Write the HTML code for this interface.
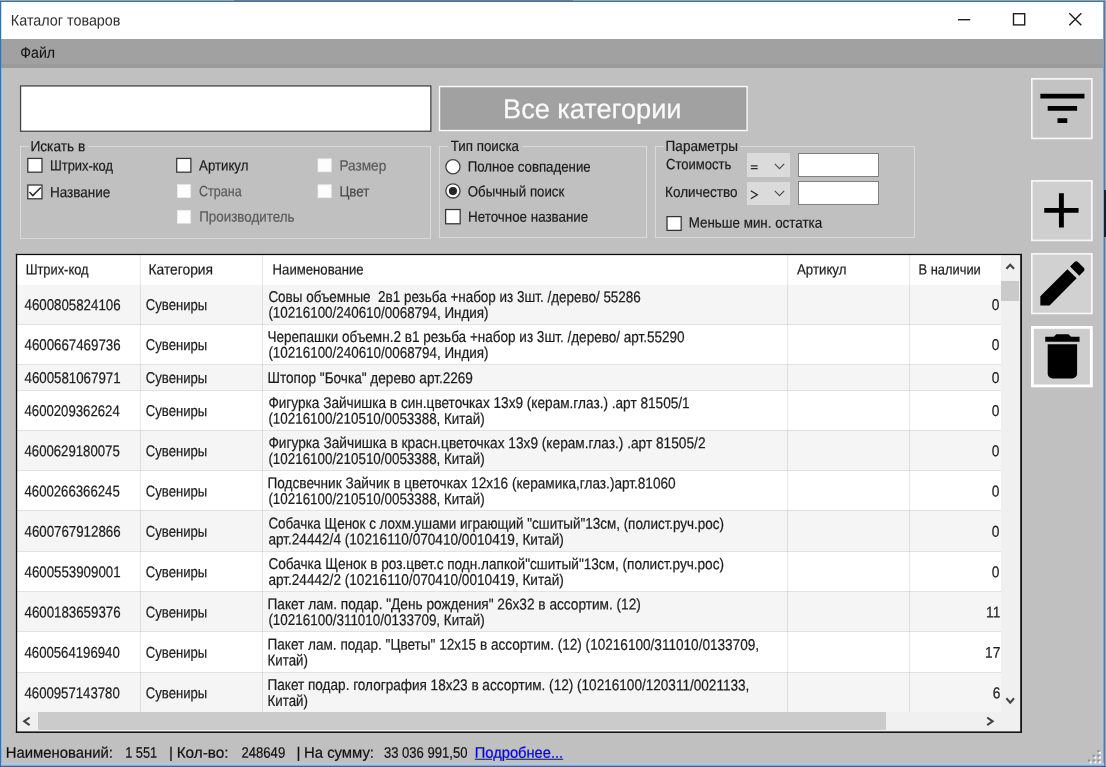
<!DOCTYPE html>
<html><head><meta charset="utf-8"><title>Каталог товаров</title>
<style>
html,body{margin:0;padding:0;}
body{width:1106px;height:767px;overflow:hidden;position:relative;background:#c0c0c0;font-family:"Liberation Sans",sans-serif;}
#w div,#w svg,#w span{position:absolute;}
#w{position:absolute;left:0;top:0;width:1106px;height:767px;overflow:hidden;will-change:transform;}
.t{-webkit-text-stroke:0.22px currentColor;white-space:pre;line-height:18px;height:18px;transform-origin:0 50%;}
</style></head><body><div id="w">
<div style="left:0px;top:0px;width:1106px;height:767px;background:#3a70a0;"></div>
<div style="left:0px;top:0px;width:1106px;height:1px;background:#7fa6c4;"></div>
<div style="left:0px;top:1px;width:1106px;height:1px;background:#41759f;"></div>
<div style="left:234px;top:0px;width:339px;height:1px;background:#5a82a8;"></div>
<div style="left:0px;top:2px;width:1px;height:765px;background:#3a72a6;"></div>
<div style="left:1px;top:2px;width:1102px;height:37px;background:#ffffff;"></div>
<div style="left:1px;top:39px;width:1102px;height:29px;background:#a1a1a1;"></div>
<div style="left:1px;top:64px;width:1102px;height:4px;background:#9b9b9b;"></div>
<div style="left:1px;top:68px;width:1102px;height:695px;background:#c0c0c0;"></div>
<div style="left:1px;top:2px;width:1px;height:37px;background:#c9deee;"></div>
<div style="left:1px;top:39px;width:1px;height:29px;background:#7e9fc0;"></div>
<div style="left:1px;top:68px;width:1px;height:698px;background:#8fb6de;"></div>
<div style="left:2px;top:68px;width:1px;height:695px;background:#b4c4d4;"></div>
<div style="left:1103px;top:2px;width:1px;height:765px;background:#84a4c0;"></div>
<div style="left:1104px;top:2px;width:1px;height:765px;background:#587a9c;"></div>
<div style="left:1105px;top:0px;width:1px;height:767px;background:#8eaac6;"></div>
<div style="left:1104px;top:190px;width:2px;height:47px;background:#15202e;"></div>
<div style="left:1102px;top:68px;width:1px;height:695px;background:#acc4d8;"></div>
<div style="left:1px;top:763px;width:1103px;height:1px;background:#b2c8dc;"></div>
<div style="left:1px;top:764px;width:1103px;height:1px;background:#a3c7ea;"></div>
<div style="left:1px;top:765px;width:1103px;height:1px;background:#7fa8d2;"></div>
<div style="left:0px;top:766px;width:1106px;height:1px;background:#2f6ba0;"></div>
<svg style="left:0;top:0" width="1106" height="767"><rect x="20.55" y="85.95" width="410.3" height="45.3" fill="#fff" stroke="#474747" stroke-width="1.3"/></svg>
<svg style="left:0;top:0" width="1106" height="767"><rect x="439.5" y="86.55" width="307.6" height="44.0" fill="#a1a1a1" stroke="#fbfbfb" stroke-width="1.4"/></svg>
<div style="left:20px;top:146px;width:411px;height:93px;border:1px solid #d9d9d9;box-sizing:border-box;"></div>
<div style="left:439px;top:146px;width:208px;height:92px;border:1px solid #d9d9d9;box-sizing:border-box;"></div>
<div style="left:655px;top:146px;width:260px;height:92px;border:1px solid #d9d9d9;box-sizing:border-box;"></div>
<div style="left:29px;top:140px;width:59px;height:14px;background:#c0c0c0;"></div>
<div style="left:448px;top:140px;width:74px;height:14px;background:#c0c0c0;"></div>
<div style="left:664px;top:140px;width:76px;height:14px;background:#c0c0c0;"></div>
<svg style="left:0;top:0" width="1106" height="767"><rect x="27.82" y="158.43" width="14.15" height="13.75" fill="#fff" stroke="#333" stroke-width="1.25"/></svg>
<svg style="left:0;top:0" width="1106" height="767"><rect x="27.82" y="185.03" width="14.15" height="13.75" fill="#fff" stroke="#333" stroke-width="1.25"/><path d="M29.50 192.10 L32.80 195.60 L40.80 187.40" fill="none" stroke="#2a2a2a" stroke-width="1.5"/></svg>
<svg style="left:0;top:0" width="1106" height="767"><rect x="176.72" y="158.43" width="14.15" height="13.75" fill="#fff" stroke="#333" stroke-width="1.25"/></svg>
<svg style="left:0;top:0" width="1106" height="767"><rect x="177.40" y="184.70" width="13.10" height="12.80" fill="#fdfdfd" stroke="#ececec" stroke-width="0.8"/></svg>
<svg style="left:0;top:0" width="1106" height="767"><rect x="177.40" y="210.40" width="13.10" height="12.80" fill="#fdfdfd" stroke="#ececec" stroke-width="0.8"/></svg>
<svg style="left:0;top:0" width="1106" height="767"><rect x="318.00" y="158.90" width="13.20" height="12.90" fill="#fdfdfd" stroke="#ececec" stroke-width="0.8"/></svg>
<svg style="left:0;top:0" width="1106" height="767"><rect x="318.00" y="184.80" width="13.20" height="12.90" fill="#fdfdfd" stroke="#ececec" stroke-width="0.8"/></svg>
<svg style="left:0;top:0" width="1106" height="767"><rect x="445.62" y="209.53" width="14.55" height="14.25" fill="#fff" stroke="#333" stroke-width="1.25"/></svg>
<svg style="left:0;top:0" width="1106" height="767"><rect x="667.02" y="216.62" width="14.15" height="13.75" fill="#fff" stroke="#333" stroke-width="1.25"/></svg>
<svg style="left:0;top:0" width="1106" height="767"><circle cx="452.95" cy="166.75" r="7.1" fill="#fff" stroke="#444" stroke-width="1.3"/></svg>
<svg style="left:0;top:0" width="1106" height="767"><circle cx="452.95" cy="190.9" r="7.1" fill="#fff" stroke="#444" stroke-width="1.3"/><circle cx="452.95" cy="191.1" r="4.1" fill="#262626"/></svg>
<div style="left:746.5px;top:153.4px;width:43px;height:23.8px;background:#dbdbdb;"></div>
<div style="left:746.5px;top:181.8px;width:43px;height:23.4px;background:#dbdbdb;"></div>
<svg style="left:774.4px;top:162.6px" width="11" height="7" viewBox="0 0 11 7"><path d="M0.8 0.9 L5.5 5.6 L10.2 0.9" fill="none" stroke="#4a4a4a" stroke-width="1.15"/></svg>
<svg style="left:774.4px;top:190.4px" width="11" height="7" viewBox="0 0 11 7"><path d="M0.8 0.9 L5.5 5.6 L10.2 0.9" fill="none" stroke="#4a4a4a" stroke-width="1.15"/></svg>
<svg style="left:748px;top:160px" width="14" height="44" viewBox="0 0 14 44"><path d="M2.8 5.9 H9.6 M2.8 8.5 H9.6" stroke="#2a2a2a" stroke-width="1.25" fill="none"/><path d="M2.8 30.7 L9.3 34.7 L2.8 38.7" stroke="#2a2a2a" stroke-width="1.35" fill="none"/></svg>
<div style="left:798px;top:153px;width:81px;height:24px;background:#fff;border:1px solid #7f7f7f;box-sizing:border-box;"></div>
<div style="left:798px;top:181px;width:81px;height:24px;background:#fff;border:1px solid #7f7f7f;box-sizing:border-box;"></div>
<div style="left:1031.3px;top:77.8px;width:61.7px;height:61.3px;background:#c3c3c3;"></div>
<svg style="left:1030.3px;top:76.8px" width="63.7" height="63.3"><rect x="1.85" y="1.85" width="60.0" height="59.599999999999994" fill="none" stroke="#f6f6f6" stroke-width="1.7"/></svg>
<svg style="left:1032.7px;top:79.39999999999999px" width="58.8" height="58.8" viewBox="0 0 24 24"><path d="M10 18h4v-2h-4v2zM3 6v2h18V6H3zm3 7h12v-2H6v2z" fill="#000"/></svg>
<div style="left:1031.3px;top:179.5px;width:61.7px;height:61.3px;background:#cfcfcf;"></div>
<svg style="left:1030.3px;top:178.5px" width="63.7" height="63.3"><rect x="1.85" y="1.85" width="60.0" height="59.599999999999994" fill="none" stroke="#f6f6f6" stroke-width="1.7"/></svg>
<svg style="left:1032.3px;top:180.5px" width="58.8" height="58.8" viewBox="0 0 24 24"><path d="M19 13h-6v6h-2v-6H5v-2h6V5h2v6h6v2z" fill="#000"/></svg>
<div style="left:1031.3px;top:252.8px;width:61.7px;height:61.3px;background:#d1d1d1;"></div>
<svg style="left:1030.3px;top:251.8px" width="63.7" height="63.3"><rect x="1.85" y="1.85" width="60.0" height="59.599999999999994" fill="none" stroke="#f6f6f6" stroke-width="1.7"/></svg>
<svg style="left:1032.7px;top:254.10000000000002px" width="58.8" height="58.8" viewBox="0 0 24 24"><path d="M3 17.25V21h3.75L17.81 9.94l-3.75-3.75L3 17.25zM20.71 7.04c.39-.39.39-1.02 0-1.41l-2.34-2.34c-.39-.39-1.02-.39-1.41 0l-1.83 1.83 3.75 3.75 1.83-1.83z" fill="#000"/></svg>
<div style="left:1031.3px;top:325.8px;width:61.7px;height:61.3px;background:#cdcdcd;"></div>
<svg style="left:1030.3px;top:324.8px" width="63.7" height="63.3"><rect x="2.4" y="2.4" width="58.900000000000006" height="58.5" fill="none" stroke="#ffffff" stroke-width="2.8"/></svg>
<svg style="left:1032.7px;top:327.1px" width="58.8" height="58.8" viewBox="0 0 24 24"><path d="M6 19c0 1.1.9 2 2 2h8c1.1 0 2-.9 2-2V7H6v12zM19 4h-3.5l-1-1h-5l-1 1H5v2h14V4z" fill="#000"/></svg>
<div style="left:17px;top:255px;width:1004px;height:478px;background:#fff;"></div>
<div style="left:17px;top:285px;width:984px;height:40px;background:#f5f5f5;"></div>
<div style="left:17px;top:324px;width:984px;height:1px;background:#e2e2e2;"></div>
<div style="left:17px;top:325px;width:984px;height:40px;background:#ffffff;"></div>
<div style="left:17px;top:364px;width:984px;height:1px;background:#e2e2e2;"></div>
<div style="left:17px;top:365px;width:984px;height:26px;background:#f5f5f5;"></div>
<div style="left:17px;top:390px;width:984px;height:1px;background:#e2e2e2;"></div>
<div style="left:17px;top:391px;width:984px;height:40px;background:#ffffff;"></div>
<div style="left:17px;top:430px;width:984px;height:1px;background:#e2e2e2;"></div>
<div style="left:17px;top:431px;width:984px;height:40px;background:#f5f5f5;"></div>
<div style="left:17px;top:470px;width:984px;height:1px;background:#e2e2e2;"></div>
<div style="left:17px;top:471px;width:984px;height:40px;background:#ffffff;"></div>
<div style="left:17px;top:510px;width:984px;height:1px;background:#e2e2e2;"></div>
<div style="left:17px;top:511px;width:984px;height:41px;background:#f5f5f5;"></div>
<div style="left:17px;top:551px;width:984px;height:1px;background:#e2e2e2;"></div>
<div style="left:17px;top:552px;width:984px;height:40px;background:#ffffff;"></div>
<div style="left:17px;top:591px;width:984px;height:1px;background:#e2e2e2;"></div>
<div style="left:17px;top:592px;width:984px;height:40px;background:#f5f5f5;"></div>
<div style="left:17px;top:631px;width:984px;height:1px;background:#e2e2e2;"></div>
<div style="left:17px;top:632px;width:984px;height:41px;background:#ffffff;"></div>
<div style="left:17px;top:672px;width:984px;height:1px;background:#e2e2e2;"></div>
<div style="left:17px;top:673px;width:984px;height:40px;background:#f5f5f5;"></div>
<div style="left:17px;top:712px;width:984px;height:1px;background:#e2e2e2;"></div>
<div style="left:140px;top:255px;width:1px;height:456.5px;background:rgba(0,0,0,0.09);"></div>
<div style="left:262px;top:255px;width:1px;height:456.5px;background:rgba(0,0,0,0.09);"></div>
<div style="left:787px;top:255px;width:1px;height:456.5px;background:rgba(0,0,0,0.09);"></div>
<div style="left:909px;top:255px;width:1px;height:456.5px;background:rgba(0,0,0,0.09);"></div>
<div style="left:1001px;top:255px;width:20px;height:477px;background:#f0f0f0;"></div>
<div style="left:17px;top:711.6px;width:1004px;height:20.4px;background:#f0f0f0;"></div>
<div style="left:1001px;top:281px;width:18px;height:20px;background:#cacaca;"></div>
<div style="left:38px;top:712px;width:847.5px;height:18px;background:#cbcbcb;"></div>
<svg style="left:0;top:0" width="1106" height="767" viewBox="0 0 1106 767"><rect x="15.87" y="253.87" width="1006.13" height="1.23" fill="#080808"/><rect x="15.87" y="253.87" width="1.33" height="479.13" fill="#080808"/><rect x="1020.2" y="253.87" width="1.8" height="479.13" fill="#161616"/><rect x="15.87" y="731.4" width="1006.13" height="1.6" fill="#161616"/></svg>
<svg style="left:0;top:0" width="1106" height="767" viewBox="0 0 1106 767"><g fill="none" stroke="#444" stroke-width="2.1"><path d="M1006.4 268.8 L1010.2 264.7 L1014 268.8"/><path d="M1006.4 698.3 L1010.2 702.6 L1014 698.3"/><path d="M29.6 717.5 L24.2 721.3 L29.6 725.1"/><path d="M987.2 717.5 L992.6 721.3 L987.2 725.1"/></g></svg>
<svg style="left:950px;top:8px" width="145" height="24" viewBox="0 0 145 24"><path d="M8 11.7 H20.2" stroke="#1e1e1e" stroke-width="1.4" fill="none"/><rect x="63.5" y="5.7" width="11.2" height="11.2" stroke="#1e1e1e" stroke-width="1.4" fill="none"/><path d="M119.3 5.3 L131.3 17.3 M131.3 5.3 L119.3 17.3" stroke="#1e1e1e" stroke-width="1.4" fill="none"/></svg>
<svg style="left:1087px;top:748.5px" width="16" height="16" viewBox="0 0 16 16"><rect x="2.60" y="12.20" width="2" height="2.2" fill="#fbfbfb"/><rect x="1.00" y="10.50" width="2.1" height="2" fill="#8e8e8e"/><rect x="7.30" y="12.20" width="2" height="2.2" fill="#fbfbfb"/><rect x="5.70" y="10.50" width="2.1" height="2" fill="#8e8e8e"/><rect x="12.00" y="12.20" width="2" height="2.2" fill="#fbfbfb"/><rect x="10.40" y="10.50" width="2.1" height="2" fill="#8e8e8e"/><rect x="7.30" y="7.45" width="2" height="2.2" fill="#fbfbfb"/><rect x="5.70" y="5.75" width="2.1" height="2" fill="#8e8e8e"/><rect x="12.00" y="7.45" width="2" height="2.2" fill="#fbfbfb"/><rect x="10.40" y="5.75" width="2.1" height="2" fill="#8e8e8e"/><rect x="12.00" y="2.70" width="2" height="2.2" fill="#fbfbfb"/><rect x="10.40" y="1.00" width="2.1" height="2" fill="#8e8e8e"/></svg>
<span class="t" style="left:10px;top:11px;font-size:15.2px;color:#2e2e2e;transform:translate(0.85px,0.40px) scaleX(0.9452) rotate(0.04deg);-webkit-text-stroke:0;">Каталог товаров</span>
<span class="t" style="left:20px;top:43px;font-size:15.2px;color:#141414;transform:translate(0.30px,0.70px) scaleX(0.9321) rotate(0.04deg);-webkit-text-stroke:0.1px;">Файл</span>
<span class="t" style="left:503px;top:100px;font-size:27.4px;color:#fafafa;transform:translate(0.02px,0.20px) scaleX(0.9918) rotate(0.04deg);">Все категории</span>
<span class="t" style="left:30px;top:137px;font-size:14.9px;color:#1c1c1c;transform:translate(0.38px,0.20px) scaleX(0.9206) rotate(0.04deg);">Искать в</span>
<span class="t" style="left:450px;top:137px;font-size:14.9px;color:#1c1c1c;transform:translate(0.70px,0.00px) scaleX(0.8972) rotate(0.04deg);">Тип поиска</span>
<span class="t" style="left:665px;top:137px;font-size:14.9px;color:#1c1c1c;transform:translate(0.59px,0.00px) scaleX(0.9115) rotate(0.04deg);">Параметры</span>
<span class="t" style="left:49px;top:156px;font-size:14.9px;color:#1c1c1c;transform:translate(0.93px,0.60px) scaleX(0.8654) rotate(0.04deg);">Штрих-код</span>
<span class="t" style="left:49px;top:183px;font-size:14.9px;color:#1c1c1c;transform:translate(0.89px,0.20px) scaleX(0.9071) rotate(0.04deg);">Название</span>
<span class="t" style="left:199px;top:156px;font-size:14.9px;color:#1c1c1c;transform:translate(0.10px,0.50px) scaleX(0.8883) rotate(0.04deg);">Артикул</span>
<span class="t" style="left:199px;top:182px;font-size:14.9px;color:#5a5a5a;transform:translate(0.10px,0.30px) scaleX(0.8392) rotate(0.04deg);">Страна</span>
<span class="t" style="left:199px;top:207px;font-size:14.9px;color:#5a5a5a;transform:translate(0.20px,0.60px) scaleX(0.8989) rotate(0.04deg);">Производитель</span>
<span class="t" style="left:339px;top:156px;font-size:14.9px;color:#5a5a5a;transform:translate(0.38px,0.60px) scaleX(0.9159) rotate(0.04deg);">Размер</span>
<span class="t" style="left:339px;top:182px;font-size:14.9px;color:#4c4c4c;transform:translate(0.40px,0.40px) scaleX(0.9003) rotate(0.04deg);">Цвет</span>
<span class="t" style="left:467px;top:157px;font-size:14.9px;color:#1c1c1c;transform:translate(0.71px,0.60px) scaleX(0.8895) rotate(0.04deg);">Полное совпадение</span>
<span class="t" style="left:467px;top:182px;font-size:14.9px;color:#1c1c1c;transform:translate(0.80px,0.40px) scaleX(0.8876) rotate(0.04deg);">Обычный поиск</span>
<span class="t" style="left:468px;top:207px;font-size:14.9px;color:#1c1c1c;transform:translate(0.00px,0.70px) scaleX(0.8985) rotate(0.04deg);">Неточное название</span>
<span class="t" style="left:666px;top:155px;font-size:14.9px;color:#1c1c1c;transform:translate(0.00px,0.30px) scaleX(0.8758) rotate(0.04deg);">Стоимость</span>
<span class="t" style="left:665px;top:183px;font-size:14.9px;color:#1c1c1c;transform:translate(0.09px,0.00px) scaleX(0.9062) rotate(0.04deg);">Количество</span>
<span class="t" style="left:688px;top:213px;font-size:14.9px;color:#1c1c1c;transform:translate(0.70px,0.60px) scaleX(0.8985) rotate(0.04deg);">Меньше мин. остатка</span>
<span class="t" style="left:5px;top:743px;font-size:15.2px;color:#111;transform:translate(0.82px,0.80px) scaleX(0.9775) rotate(0.04deg);">Наименований:</span>
<span class="t" style="left:125px;top:743px;font-size:15.2px;color:#111;transform:translate(0.16px,0.80px) scaleX(0.8425) rotate(0.04deg);">1 551</span>
<span class="t" style="left:168px;top:743px;font-size:15.2px;color:#111;transform:translate(0.90px,0.80px) scaleX(1.0000) rotate(0.04deg);">|</span>
<span class="t" style="left:176px;top:743px;font-size:15.2px;color:#111;transform:translate(0.69px,0.80px) scaleX(1.0077) rotate(0.04deg);">Кол-во:</span>
<span class="t" style="left:241px;top:743px;font-size:15.2px;color:#111;transform:translate(0.40px,0.80px) scaleX(0.8640) rotate(0.04deg);">248649</span>
<span class="t" style="left:296px;top:743px;font-size:15.2px;color:#111;transform:translate(0.40px,0.80px) scaleX(1.0000) rotate(0.04deg);">|</span>
<span class="t" style="left:304px;top:743px;font-size:15.2px;color:#111;transform:translate(0.02px,0.80px) scaleX(0.9784) rotate(0.04deg);">На сумму:</span>
<span class="t" style="left:383px;top:743px;font-size:15.2px;color:#111;transform:translate(0.90px,0.80px) scaleX(0.8606) rotate(0.04deg);">33 036 991,50</span>
<span class="t" style="left:474px;top:743px;font-size:15.2px;color:#0000e6;transform:translate(0.83px,0.80px) scaleX(0.9663) rotate(0.04deg);text-decoration:underline;">Подробнее...</span>
<span class="t" style="left:25px;top:260px;font-size:14.9px;color:#1c1c1c;transform:translate(0.64px,0.50px) scaleX(0.8640) rotate(0.04deg);">Штрих-код</span>
<span class="t" style="left:148px;top:260px;font-size:14.9px;color:#1c1c1c;transform:translate(0.47px,0.50px) scaleX(0.9278) rotate(0.04deg);">Категория</span>
<span class="t" style="left:272px;top:260px;font-size:14.9px;color:#1c1c1c;transform:translate(0.62px,0.50px) scaleX(0.8819) rotate(0.04deg);">Наименование</span>
<span class="t" style="left:797px;top:260px;font-size:14.9px;color:#1c1c1c;transform:translate(0.00px,0.50px) scaleX(0.8901) rotate(0.04deg);">Артикул</span>
<span class="t" style="left:918px;top:260px;font-size:14.9px;color:#1c1c1c;transform:translate(0.54px,0.50px) scaleX(0.8648) rotate(0.04deg);">В наличии</span>
<span class="t" style="left:24px;top:296px;font-size:15.6px;color:#1c1c1c;transform:translate(0.50px,0.10px) scaleX(0.8521) rotate(0.04deg);">4600805824106</span>
<span class="t" style="left:145px;top:296px;font-size:15.6px;color:#1c1c1c;transform:translate(0.80px,0.10px) scaleX(0.8403) rotate(0.04deg);">Сувениры</span>
<span class="t" style="left:268px;top:287px;font-size:15.6px;color:#1c1c1c;transform:translate(0.40px,0.90px) scaleX(0.8627) rotate(0.04deg);">Совы объемные  2в1 резьба +набор из 3шт. /дерево/ 55286</span>
<span class="t" style="left:268px;top:303px;font-size:15.6px;color:#1c1c1c;transform:translate(0.40px,0.80px) scaleX(0.8603) rotate(0.04deg);">(10216100/240610/0068794, Индия)</span>
<span class="t" style="left:991px;top:296px;font-size:15.6px;color:#1c1c1c;transform:translate(0.78px,0.10px) scaleX(0.8800) rotate(0.04deg);">0</span>
<span class="t" style="left:24px;top:336px;font-size:15.6px;color:#1c1c1c;transform:translate(0.50px,0.10px) scaleX(0.8521) rotate(0.04deg);">4600667469736</span>
<span class="t" style="left:145px;top:336px;font-size:15.6px;color:#1c1c1c;transform:translate(0.80px,0.10px) scaleX(0.8403) rotate(0.04deg);">Сувениры</span>
<span class="t" style="left:267px;top:327px;font-size:15.6px;color:#1c1c1c;transform:translate(0.53px,0.90px) scaleX(0.8677) rotate(0.04deg);">Черепашки объемн.2 в1 резьба +набор из 3шт. /дерево/ арт.55290</span>
<span class="t" style="left:268px;top:343px;font-size:15.6px;color:#1c1c1c;transform:translate(0.40px,0.80px) scaleX(0.8603) rotate(0.04deg);">(10216100/240610/0068794, Индия)</span>
<span class="t" style="left:991px;top:336px;font-size:15.6px;color:#1c1c1c;transform:translate(0.78px,0.10px) scaleX(0.8800) rotate(0.04deg);">0</span>
<span class="t" style="left:24px;top:369px;font-size:15.6px;color:#1c1c1c;transform:translate(0.50px,0.10px) scaleX(0.8521) rotate(0.04deg);">4600581067971</span>
<span class="t" style="left:145px;top:369px;font-size:15.6px;color:#1c1c1c;transform:translate(0.80px,0.10px) scaleX(0.8403) rotate(0.04deg);">Сувениры</span>
<span class="t" style="left:267px;top:369px;font-size:15.6px;color:#1c1c1c;transform:translate(0.53px,0.10px) scaleX(0.8715) rotate(0.04deg);">Штопор &quot;Бочка&quot; дерево арт.2269</span>
<span class="t" style="left:991px;top:369px;font-size:15.6px;color:#1c1c1c;transform:translate(0.78px,0.10px) scaleX(0.8800) rotate(0.04deg);">0</span>
<span class="t" style="left:24px;top:402px;font-size:15.6px;color:#1c1c1c;transform:translate(0.50px,0.10px) scaleX(0.8446) rotate(0.04deg);">4600209362624</span>
<span class="t" style="left:145px;top:402px;font-size:15.6px;color:#1c1c1c;transform:translate(0.80px,0.10px) scaleX(0.8403) rotate(0.04deg);">Сувениры</span>
<span class="t" style="left:268px;top:393px;font-size:15.6px;color:#1c1c1c;transform:translate(0.40px,0.90px) scaleX(0.8736) rotate(0.04deg);">Фигурка Зайчишка в син.цветочках 13х9 (керам.глаз.) .арт 81505/1</span>
<span class="t" style="left:268px;top:409px;font-size:15.6px;color:#1c1c1c;transform:translate(0.40px,0.80px) scaleX(0.8583) rotate(0.04deg);">(10216100/210510/0053388, Китай)</span>
<span class="t" style="left:991px;top:402px;font-size:15.6px;color:#1c1c1c;transform:translate(0.78px,0.10px) scaleX(0.8800) rotate(0.04deg);">0</span>
<span class="t" style="left:24px;top:442px;font-size:15.6px;color:#1c1c1c;transform:translate(0.50px,0.20px) scaleX(0.8446) rotate(0.04deg);">4600629180075</span>
<span class="t" style="left:145px;top:442px;font-size:15.6px;color:#1c1c1c;transform:translate(0.80px,0.20px) scaleX(0.8403) rotate(0.04deg);">Сувениры</span>
<span class="t" style="left:268px;top:434px;font-size:15.6px;color:#1c1c1c;transform:translate(0.40px,0.00px) scaleX(0.8783) rotate(0.04deg);">Фигурка Зайчишка в красн.цветочках 13х9 (керам.глаз.) .арт 81505/2</span>
<span class="t" style="left:268px;top:449px;font-size:15.6px;color:#1c1c1c;transform:translate(0.40px,0.90px) scaleX(0.8583) rotate(0.04deg);">(10216100/210510/0053388, Китай)</span>
<span class="t" style="left:991px;top:442px;font-size:15.6px;color:#1c1c1c;transform:translate(0.78px,0.20px) scaleX(0.8800) rotate(0.04deg);">0</span>
<span class="t" style="left:24px;top:482px;font-size:15.6px;color:#1c1c1c;transform:translate(0.50px,0.40px) scaleX(0.8446) rotate(0.04deg);">4600266366245</span>
<span class="t" style="left:145px;top:482px;font-size:15.6px;color:#1c1c1c;transform:translate(0.80px,0.40px) scaleX(0.8403) rotate(0.04deg);">Сувениры</span>
<span class="t" style="left:267px;top:474px;font-size:15.6px;color:#1c1c1c;transform:translate(0.53px,0.20px) scaleX(0.8726) rotate(0.04deg);">Подсвечник Зайчик в цветочках 12х16 (керамика,глаз.)арт.81060</span>
<span class="t" style="left:268px;top:490px;font-size:15.6px;color:#1c1c1c;transform:translate(0.40px,0.10px) scaleX(0.8583) rotate(0.04deg);">(10216100/210510/0053388, Китай)</span>
<span class="t" style="left:991px;top:482px;font-size:15.6px;color:#1c1c1c;transform:translate(0.78px,0.40px) scaleX(0.8800) rotate(0.04deg);">0</span>
<span class="t" style="left:24px;top:522px;font-size:15.6px;color:#1c1c1c;transform:translate(0.50px,0.80px) scaleX(0.8521) rotate(0.04deg);">4600767912866</span>
<span class="t" style="left:145px;top:522px;font-size:15.6px;color:#1c1c1c;transform:translate(0.80px,0.80px) scaleX(0.8403) rotate(0.04deg);">Сувениры</span>
<span class="t" style="left:268px;top:514px;font-size:15.6px;color:#1c1c1c;transform:translate(0.40px,0.60px) scaleX(0.8621) rotate(0.04deg);">Собачка Щенок с лохм.ушами играющий &quot;сшитый&quot;13см, (полист.руч.рос)</span>
<span class="t" style="left:268px;top:530px;font-size:15.6px;color:#1c1c1c;transform:translate(0.40px,0.50px) scaleX(0.8732) rotate(0.04deg);">арт.24442/4 (10216110/070410/0010419, Китай)</span>
<span class="t" style="left:991px;top:522px;font-size:15.6px;color:#1c1c1c;transform:translate(0.78px,0.80px) scaleX(0.8800) rotate(0.04deg);">0</span>
<span class="t" style="left:24px;top:563px;font-size:15.6px;color:#1c1c1c;transform:translate(0.50px,0.20px) scaleX(0.8521) rotate(0.04deg);">4600553909001</span>
<span class="t" style="left:145px;top:563px;font-size:15.6px;color:#1c1c1c;transform:translate(0.80px,0.20px) scaleX(0.8403) rotate(0.04deg);">Сувениры</span>
<span class="t" style="left:268px;top:555px;font-size:15.6px;color:#1c1c1c;transform:translate(0.40px,0.00px) scaleX(0.8716) rotate(0.04deg);">Собачка Щенок в роз.цвет.с подн.лапкой&quot;сшитый&quot;13см, (полист.руч.рос)</span>
<span class="t" style="left:268px;top:570px;font-size:15.6px;color:#1c1c1c;transform:translate(0.40px,0.90px) scaleX(0.8732) rotate(0.04deg);">арт.24442/2 (10216110/070410/0010419, Китай)</span>
<span class="t" style="left:991px;top:563px;font-size:15.6px;color:#1c1c1c;transform:translate(0.78px,0.20px) scaleX(0.8800) rotate(0.04deg);">0</span>
<span class="t" style="left:24px;top:603px;font-size:15.6px;color:#1c1c1c;transform:translate(0.50px,0.40px) scaleX(0.8521) rotate(0.04deg);">4600183659376</span>
<span class="t" style="left:145px;top:603px;font-size:15.6px;color:#1c1c1c;transform:translate(0.80px,0.40px) scaleX(0.8403) rotate(0.04deg);">Сувениры</span>
<span class="t" style="left:267px;top:595px;font-size:15.6px;color:#1c1c1c;transform:translate(0.52px,0.20px) scaleX(0.8759) rotate(0.04deg);">Пакет лам. подар. &quot;День рождения&quot; 26х32 в ассортим. (12)</span>
<span class="t" style="left:268px;top:611px;font-size:15.6px;color:#1c1c1c;transform:translate(0.40px,0.10px) scaleX(0.8622) rotate(0.04deg);">(10216100/311010/0133709, Китай)</span>
<span class="t" style="left:986px;top:603px;font-size:15.6px;color:#1c1c1c;transform:translate(0.05px,0.40px) scaleX(0.8800) rotate(0.04deg);">11</span>
<span class="t" style="left:24px;top:643px;font-size:15.6px;color:#1c1c1c;transform:translate(0.50px,0.80px) scaleX(0.8446) rotate(0.04deg);">4600564196940</span>
<span class="t" style="left:145px;top:643px;font-size:15.6px;color:#1c1c1c;transform:translate(0.80px,0.80px) scaleX(0.8403) rotate(0.04deg);">Сувениры</span>
<span class="t" style="left:267px;top:635px;font-size:15.6px;color:#1c1c1c;transform:translate(0.53px,0.60px) scaleX(0.8708) rotate(0.04deg);">Пакет лам. подар. &quot;Цветы&quot; 12х15 в ассортим. (12) (10216100/311010/0133709,</span>
<span class="t" style="left:267px;top:651px;font-size:15.6px;color:#1c1c1c;transform:translate(0.55px,0.50px) scaleX(0.8517) rotate(0.04deg);">Китай)</span>
<span class="t" style="left:985px;top:643px;font-size:15.6px;color:#1c1c1c;transform:translate(0.03px,0.80px) scaleX(0.8800) rotate(0.04deg);">17</span>
<span class="t" style="left:24px;top:684px;font-size:15.6px;color:#1c1c1c;transform:translate(0.50px,0.25px) scaleX(0.8446) rotate(0.04deg);">4600957143780</span>
<span class="t" style="left:145px;top:684px;font-size:15.6px;color:#1c1c1c;transform:translate(0.80px,0.25px) scaleX(0.8403) rotate(0.04deg);">Сувениры</span>
<span class="t" style="left:267px;top:676px;font-size:15.6px;color:#1c1c1c;transform:translate(0.53px,0.05px) scaleX(0.8705) rotate(0.04deg);">Пакет подар. голография 18х23 в ассортим. (12) (10216100/120311/0021133,</span>
<span class="t" style="left:267px;top:691px;font-size:15.6px;color:#1c1c1c;transform:translate(0.55px,0.95px) scaleX(0.8517) rotate(0.04deg);">Китай)</span>
<span class="t" style="left:992px;top:684px;font-size:15.6px;color:#1c1c1c;transform:translate(0.66px,0.25px) scaleX(0.8800) rotate(0.04deg);">6</span>
</div></body></html>
